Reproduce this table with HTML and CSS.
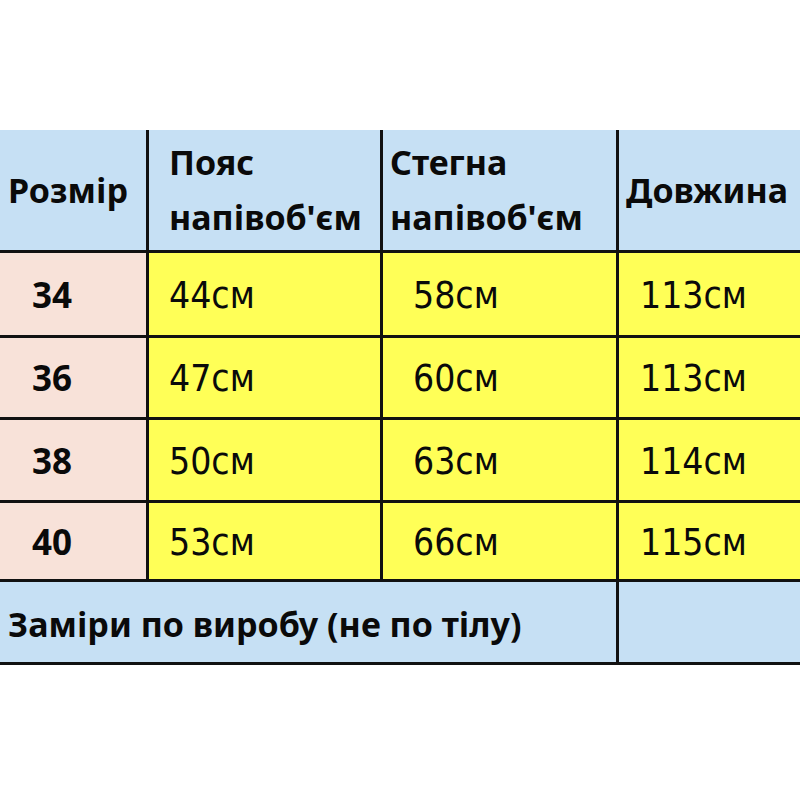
FILE: index.html
```html
<!DOCTYPE html>
<html lang="uk">
<head>
<meta charset="utf-8">
<link rel="stylesheet" href="styles.css">
</head>
<body>
<div class="sheet">
  <div class="cell head size">Розмір</div>
  <div class="cell head two c2">Пояс<br>напівоб'єм</div>
  <div class="cell head two c3">Стегна<br>напівоб'єм</div>
  <div class="cell head len">Довжина</div>

  <div class="cell label r1">34</div>
  <div class="cell val c2 r1">44см</div>
  <div class="cell val c3 r1">58см</div>
  <div class="cell val c4 r1">113см</div>

  <div class="cell label r2">36</div>
  <div class="cell val c2 r2">47см</div>
  <div class="cell val c3 r2">60см</div>
  <div class="cell val c4 r2">113см</div>

  <div class="cell label r3">38</div>
  <div class="cell val c2 r3">50см</div>
  <div class="cell val c3 r3">63см</div>
  <div class="cell val c4 r3">114см</div>

  <div class="cell label r4">40</div>
  <div class="cell val c2 r4">53см</div>
  <div class="cell val c3 r4">66см</div>
  <div class="cell val c4 r4">115см</div>

  <div class="cell foot">Заміри по виробу (не по тілу)</div>
  <div class="cell foot-empty"></div>
</div>
</body>
</html>
```

FILE: styles.css
```css
html, body {
  margin: 0;
  padding: 0;
  background: #ffffff;
}

.sheet {
  margin-top: 130px;
  width: 800px;
  display: grid;
  grid-template-columns: 146px 231px 233px 184px;
  grid-template-rows: 120px 82px 79px 80px 76px 80px;
  column-gap: 3px;
  row-gap: 3px;
  background: #111111;
  padding-bottom: 3px;
}

.cell {
  display: flex;
  align-items: center;
  color: #0a0a0a;
  font-family: "Noto Sans", "DejaVu Sans", sans-serif;
}

.head {
  background: #c6e0f4;
  font-weight: 700;
  font-size: 34px;
  padding-left: 8px;
}

.head.c2 {
  padding-left: 20px;
}

.head.c3 {
  padding-left: 7px;
}

.head.len {
  padding-left: 7px;
}

.head.two {
  line-height: 55px;
}

.label {
  background: #f8e2d9;
  font-weight: 700;
  font-size: 35px;
  padding-left: 32px;
}

.val {
  background: #ffff57;
  font-family: "DejaVu Sans Condensed", "DejaVu Sans", sans-serif;
  font-size: 37px;
  padding-top: 2px;
}

.val.c2 {
  padding-left: 20px;
}

.val.c3 {
  padding-left: 30px;
}

.val.c4 {
  padding-left: 21px;
}

.foot {
  grid-column: 1 / 4;
  background: #c6e0f4;
  font-weight: 700;
  font-size: 34px;
  padding-left: 8px;
  padding-top: 4px;
}

.foot-empty {
  background: #c6e0f4;
}
```
